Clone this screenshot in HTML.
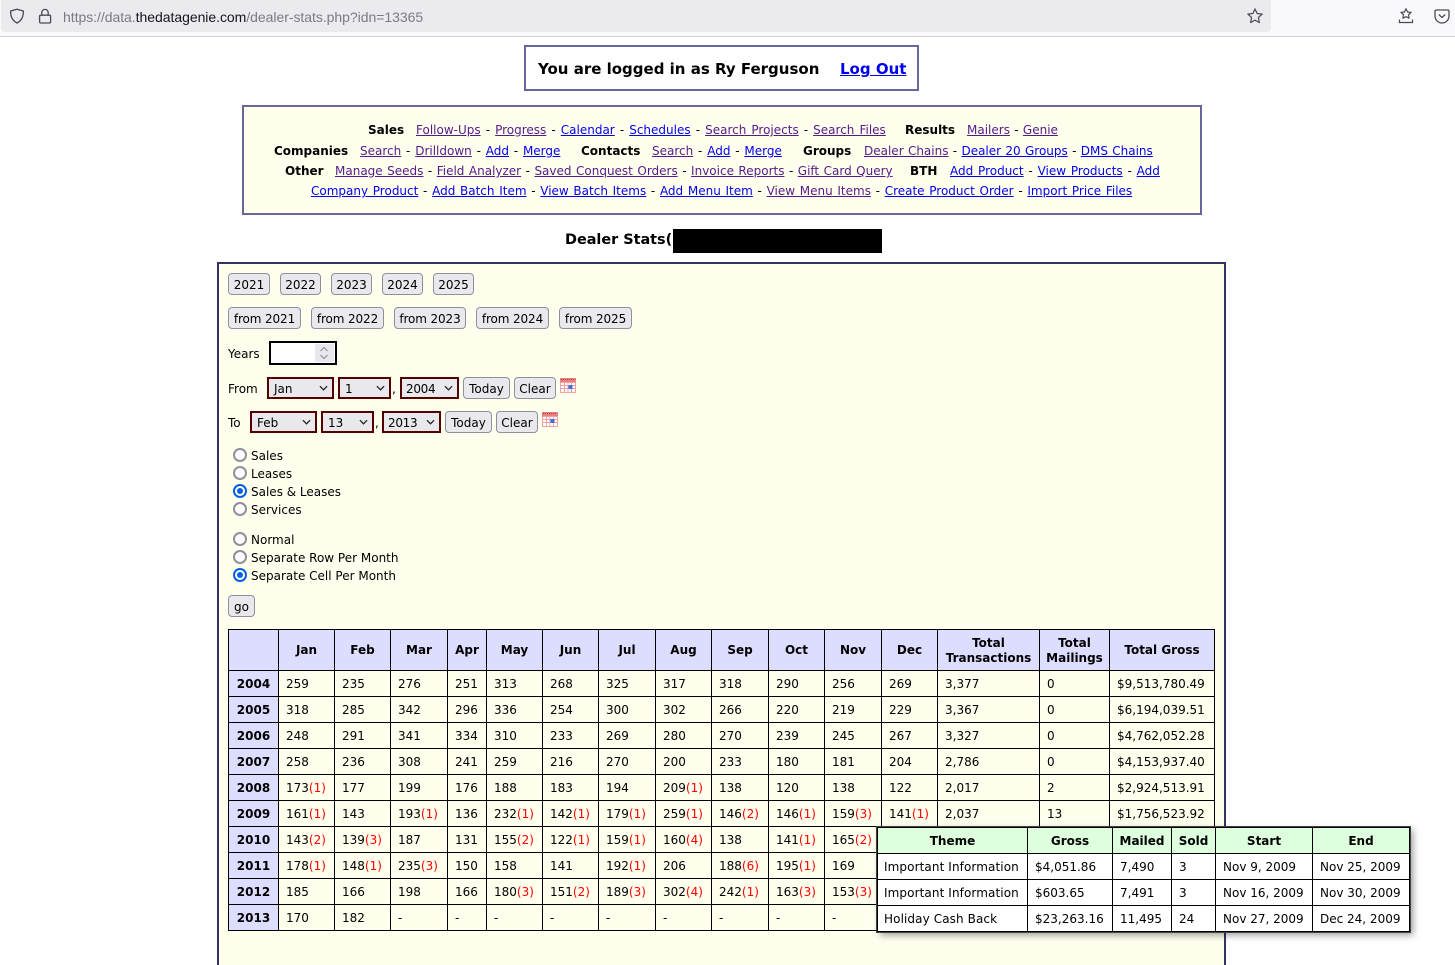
<!DOCTYPE html>
<html><head><meta charset="utf-8"><title>Dealer Stats</title>
<style>
html,body{margin:0;padding:0;background:#fff;width:1455px;height:965px;overflow:hidden}
body{position:relative;font-family:"DejaVu Sans",Verdana,sans-serif;font-size:12px;color:#000}
.a{position:absolute;white-space:nowrap}
.btn{position:absolute;box-sizing:border-box;background:#e9e9ed;border:1px solid #8f8f9d;border-radius:4px;height:22px;line-height:22px;text-align:center;white-space:nowrap}
.fr{letter-spacing:-.12px}
.sel{position:absolute;box-sizing:border-box;background:#e9e9ed;border:2px solid #500;height:22px;line-height:20px;padding-left:4px;white-space:nowrap}
.sel svg{position:absolute;right:4px;top:6px}
.lbl{position:absolute;white-space:nowrap;line-height:18px;margin-top:1px}
.r{position:absolute;box-sizing:border-box;width:14px;height:14px;border-radius:50%;border:2px solid #8f8f9d;background:#fff}
.r.c{border-color:#0060df}
.r.c:after{content:"";position:absolute;left:2px;top:2px;width:6px;height:6px;border-radius:50%;background:#0060df}
a{color:#00e;text-decoration:underline}
a.v{color:#551a8b}
.nav{position:absolute;white-space:nowrap;line-height:20px;height:20px}
.nav b{color:#000}
table{position:absolute;border-collapse:collapse;table-layout:fixed;font-size:12px}
td,th{box-sizing:border-box;border:1px solid #000;padding:0 0 0 7px;height:26px;text-align:left;white-space:nowrap;overflow:hidden}
#m{left:228px;top:629px;background:#ffffee}
#m th{background:#ddf;text-align:center;padding:1px 0 0;line-height:15px;height:41px}
#m td.y{background:#ddf;font-weight:bold;text-align:center;padding:0}
#m i{font-style:normal;color:#f00}
#p{left:877px;top:827px;background:#fff;outline:1px solid #444;box-shadow:3px 3px 7px rgba(0,0,0,.4)}
#p th{background:#dfd;text-align:center;padding:0}
#p td:first-child{padding-left:6px;letter-spacing:.1px}
</style></head><body>

<div class="a" style="left:0;top:0;width:1455px;height:36px;background:#f9f9fb;border-bottom:1px solid #cfcfd8"></div>
<div class="a" style="left:1px;top:0;width:1270px;height:32px;background:#ebebef;border-radius:0 0 4px 4px"></div>
<svg class="a" style="left:9px;top:8px" width="16" height="16" viewBox="0 0 16 16" fill="none" stroke="#4a4a55" stroke-width="1.3"><path d="M8 1.2 L14.3 3 C14.6 8.5 12.5 12.6 8 15 C3.5 12.6 1.4 8.5 1.7 3 Z"/></svg>
<svg class="a" style="left:37px;top:8px" width="16" height="16" viewBox="0 0 16 16" fill="none" stroke="#4a4a55" stroke-width="1.3"><rect x="2.6" y="7.2" width="11" height="7.8" rx="1.2"/><path d="M4.8 7.2V4.6a3.2 3.2 0 0 1 6.4 0V7.2"/></svg>
<div class="a" style="left:63px;top:9px;font:14px/16px 'Liberation Sans',sans-serif;color:#7a7a80;letter-spacing:-.04px">https://data.<span style="color:#15141a">thedatagenie.com</span>/dealer-stats.php?idn=13365</div>
<svg class="a" style="left:1247px;top:8px" width="16" height="16" viewBox="0 0 16 16" fill="none" stroke="#4a4a55" stroke-width="1.2"><path d="M8 .9 10.1 5.5 15.2 6.1 11.4 9.5 12.4 14.6 8 12.1 3.6 14.6 4.6 9.5 .8 6.1 5.9 5.5Z" stroke-linejoin="round"/></svg>
<svg class="a" style="left:1398px;top:8px" width="16" height="16" viewBox="0 0 16 16" fill="none" stroke="#4a4a55" stroke-width="1.2"><path d="M8 .8 9.6 4 13 4.4 10.5 6.8 11.1 10.2 8 8.6 4.9 10.2 5.5 6.8 3 4.4 6.4 4Z" stroke-linejoin="round"/><path d="M1.5 11.5V14.5H14.5V11.5" stroke-width="1.2"/></svg>
<svg class="a" style="left:1434px;top:9px" width="16" height="15" viewBox="0 0 16 15" fill="none" stroke="#4a4a55" stroke-width="1.3"><path d="M2.3 1H13.7A1.3 1.3 0 0 1 15 2.3V7A7 7 0 0 1 1 7V2.3A1.3 1.3 0 0 1 2.3 1Z"/><path d="M4.8 5.5 8 8.5 11.2 5.5"/></svg>

<div class="a" style="left:524px;top:45px;width:395px;height:46px;box-sizing:border-box;border:2px solid #666699"></div>
<div class="a" style="left:538px;top:60px;font-weight:bold;font-size:15px;line-height:19px">You are logged in as Ry Ferguson</div>
<div class="a" style="left:840px;top:60px;font-weight:bold;font-size:15px;line-height:19px"><a href="#">Log Out</a></div>

<div class="a" style="left:242px;top:105px;width:960px;height:110px;box-sizing:border-box;border:2px solid #666699;background:#ffffee"></div>

<div class="nav" style="left:368px;top:120px"><b>Sales</b></div>
<div class="nav" style="left:416px;top:120px;word-spacing:1.25px"><a class="v" href="#">Follow-Ups</a> - <a class="v" href="#">Progress</a> - <a href="#">Calendar</a> - <a href="#">Schedules</a> - <a class="v" href="#">Search Projects</a> - <a class="v" href="#">Search Files</a></div>
<div class="nav" style="left:905px;top:120px"><b>Results</b></div>
<div class="nav" style="left:967px;top:120px;word-spacing:.5px"><a class="v" href="#">Mailers</a> - <a class="v" href="#">Genie</a></div>

<div class="nav" style="left:274px;top:141px"><b>Companies</b></div>
<div class="nav" style="left:360px;top:141px;word-spacing:1px"><a class="v" href="#">Search</a> - <a class="v" href="#">Drilldown</a> - <a href="#">Add</a> - <a href="#">Merge</a></div>
<div class="nav" style="left:581px;top:141px"><b>Contacts</b></div>
<div class="nav" style="left:652px;top:141px;word-spacing:1px"><a class="v" href="#">Search</a> - <a href="#">Add</a> - <a href="#">Merge</a></div>
<div class="nav" style="left:803px;top:141px"><b>Groups</b></div>
<div class="nav" style="left:864px;top:141px;word-spacing:.5px"><a class="v" href="#">Dealer Chains</a> - <a href="#">Dealer 20 Groups</a> - <a href="#">DMS Chains</a></div>

<div class="nav" style="left:285px;top:161px"><b>Other</b></div>
<div class="nav" style="left:335px;top:161px;word-spacing:.67px"><a class="v" href="#">Manage Seeds</a> - <a class="v" href="#">Field Analyzer</a> - <a class="v" href="#">Saved Conquest Orders</a> - <a class="v" href="#">Invoice Reports</a> - <a class="v" href="#">Gift Card Query</a></div>
<div class="nav" style="left:910px;top:161px"><b>BTH</b></div>
<div class="nav" style="left:950px;top:161px;word-spacing:1px"><a href="#">Add Product</a> - <a href="#">View Products</a> - <a href="#">Add</a></div>

<div class="nav" style="left:311px;top:181px;word-spacing:.88px"><a href="#">Company Product</a> - <a href="#">Add Batch Item</a> - <a href="#">View Batch Items</a> - <a href="#">Add Menu Item</a> - <a class="v" href="#">View Menu Items</a> - <a href="#">Create Product Order</a> - <a href="#">Import Price Files</a></div>

<div class="a" style="left:565px;top:231px;font-weight:bold;font-size:14.4px;line-height:19px">Dealer Stats(</div>
<div class="a" style="left:673px;top:229px;width:209px;height:24px;background:#000"></div>

<div class="a" style="left:217px;top:262px;width:1009px;height:720px;box-sizing:border-box;border:2px solid #333366;background:#ffffee"></div>

<div class="btn" style="left:228px;top:273px;width:42px">2021</div>
<div class="btn" style="left:280px;top:273px;width:41px">2022</div>
<div class="btn" style="left:331px;top:273px;width:41px">2023</div>
<div class="btn" style="left:382px;top:273px;width:41px">2024</div>
<div class="btn" style="left:433px;top:273px;width:41px">2025</div>
<div class="btn fr" style="left:228px;top:307px;width:73px">from 2021</div>
<div class="btn fr" style="left:311px;top:307px;width:73px">from 2022</div>
<div class="btn fr" style="left:394px;top:307px;width:72px">from 2023</div>
<div class="btn fr" style="left:476px;top:307px;width:73px">from 2024</div>
<div class="btn fr" style="left:559px;top:307px;width:73px">from 2025</div>

<div class="lbl" style="left:228px;top:344px">Years</div>
<div class="a" style="left:269px;top:341px;width:68px;height:24px;box-sizing:border-box;border:2px solid #000;background:#fff"></div>
<div class="a" style="left:315px;top:344px;width:19px;height:18px;background:#e9e9ed"></div>
<svg class="a" style="left:319px;top:346px" width="10" height="14" viewBox="0 0 10 14" fill="none" stroke="#8a8a90" stroke-width="1.1"><path d="M1.5 5 5 1.5 8.5 5M1.5 9 5 12.5 8.5 9"/></svg>

<div class="lbl" style="left:228px;top:379px">From</div>
<div class="sel" style="left:267px;top:377px;width:67px;padding-left:5px">Jan<svg width="9" height="6" viewBox="0 0 10 6" fill="none" stroke="#222" stroke-width="1.4"><path d="M1 1 5 5 9 1"/></svg></div>
<div class="sel" style="left:338px;top:377px;width:53px;padding-left:5px">1<svg width="9" height="6" viewBox="0 0 10 6" fill="none" stroke="#222" stroke-width="1.4"><path d="M1 1 5 5 9 1"/></svg></div>
<div class="lbl" style="left:392px;top:379px">,</div>
<div class="sel" style="left:400px;top:377px;width:59px;letter-spacing:-.3px">2004<svg width="9" height="6" viewBox="0 0 10 6" fill="none" stroke="#222" stroke-width="1.4"><path d="M1 1 5 5 9 1"/></svg></div>
<div class="btn" style="left:463px;top:377px;width:47px">Today</div>
<div class="btn" style="left:514px;top:377px;width:42px">Clear</div>
<svg class="a" style="left:560px;top:378px" width="16" height="15" viewBox="0 0 16 15"><rect width="16" height="15" fill="#f2a0a0"/><rect width="16" height="4" fill="#e88080"/><path d="M1 1.5h14" stroke="#b04040" stroke-dasharray="1 1"/><path d="M1 5h14v9H1z" fill="#fff"/><path d="M1 7.5h14M1 10.5h14M4.5 5v9M8 5v9M11.5 5v9" stroke="#f2a0a0"/><rect x="8.5" y="7" width="4" height="4" fill="#3a6fe0"/></svg>

<div class="lbl" style="left:228px;top:413px">To</div>
<div class="sel" style="left:250px;top:411px;width:67px;padding-left:5px">Feb<svg width="9" height="6" viewBox="0 0 10 6" fill="none" stroke="#222" stroke-width="1.4"><path d="M1 1 5 5 9 1"/></svg></div>
<div class="sel" style="left:321px;top:411px;width:53px;padding-left:5px">13<svg width="9" height="6" viewBox="0 0 10 6" fill="none" stroke="#222" stroke-width="1.4"><path d="M1 1 5 5 9 1"/></svg></div>
<div class="lbl" style="left:375px;top:413px">,</div>
<div class="sel" style="left:382px;top:411px;width:59px;letter-spacing:-.3px">2013<svg width="9" height="6" viewBox="0 0 10 6" fill="none" stroke="#222" stroke-width="1.4"><path d="M1 1 5 5 9 1"/></svg></div>
<div class="btn" style="left:445px;top:411px;width:47px">Today</div>
<div class="btn" style="left:496px;top:411px;width:42px">Clear</div>
<svg class="a" style="left:542px;top:412px" width="16" height="15" viewBox="0 0 16 15"><rect width="16" height="15" fill="#f2a0a0"/><rect width="16" height="4" fill="#e88080"/><path d="M1 1.5h14" stroke="#b04040" stroke-dasharray="1 1"/><path d="M1 5h14v9H1z" fill="#fff"/><path d="M1 7.5h14M1 10.5h14M4.5 5v9M8 5v9M11.5 5v9" stroke="#f2a0a0"/><rect x="8.5" y="7" width="4" height="4" fill="#3a6fe0"/></svg>

<div class="r" style="left:233px;top:448px"></div><div class="lbl" style="left:251px;top:446px">Sales</div>
<div class="r" style="left:233px;top:466px"></div><div class="lbl" style="left:251px;top:464px">Leases</div>
<div class="r c" style="left:233px;top:484px"></div><div class="lbl" style="left:251px;top:482px">Sales &amp; Leases</div>
<div class="r" style="left:233px;top:502px"></div><div class="lbl" style="left:251px;top:500px">Services</div>
<div class="r" style="left:233px;top:532px"></div><div class="lbl" style="left:251px;top:530px">Normal</div>
<div class="r" style="left:233px;top:550px"></div><div class="lbl" style="left:251px;top:548px">Separate Row Per Month</div>
<div class="r c" style="left:233px;top:568px"></div><div class="lbl" style="left:251px;top:566px">Separate Cell Per Month</div>
<div class="btn" style="left:228px;top:595px;width:27px">go</div>

<table id="m" style="width:986px">
<colgroup><col style="width:50px"><col style="width:56px"><col style="width:56px"><col style="width:57px"><col style="width:39px"><col style="width:56px"><col style="width:56px"><col style="width:57px"><col style="width:56px"><col style="width:57px"><col style="width:56px"><col style="width:57px"><col style="width:56px"><col style="width:102px"><col style="width:70px"><col style="width:105px"></colgroup>
<tr><th></th><th>Jan</th><th>Feb</th><th>Mar</th><th>Apr</th><th>May</th><th>Jun</th><th>Jul</th><th>Aug</th><th>Sep</th><th>Oct</th><th>Nov</th><th>Dec</th><th>Total<br>Transactions</th><th>Total<br>Mailings</th><th>Total Gross</th></tr>
<tr><td class="y">2004</td><td>259</td><td>235</td><td>276</td><td>251</td><td>313</td><td>268</td><td>325</td><td>317</td><td>318</td><td>290</td><td>256</td><td>269</td><td>3,377</td><td>0</td><td>$9,513,780.49</td></tr>
<tr><td class="y">2005</td><td>318</td><td>285</td><td>342</td><td>296</td><td>336</td><td>254</td><td>300</td><td>302</td><td>266</td><td>220</td><td>219</td><td>229</td><td>3,367</td><td>0</td><td>$6,194,039.51</td></tr>
<tr><td class="y">2006</td><td>248</td><td>291</td><td>341</td><td>334</td><td>310</td><td>233</td><td>269</td><td>280</td><td>270</td><td>239</td><td>245</td><td>267</td><td>3,327</td><td>0</td><td>$4,762,052.28</td></tr>
<tr><td class="y">2007</td><td>258</td><td>236</td><td>308</td><td>241</td><td>259</td><td>216</td><td>270</td><td>200</td><td>233</td><td>180</td><td>181</td><td>204</td><td>2,786</td><td>0</td><td>$4,153,937.40</td></tr>
<tr><td class="y">2008</td><td>173<i>(1)</i></td><td>177</td><td>199</td><td>176</td><td>188</td><td>183</td><td>194</td><td>209<i>(1)</i></td><td>138</td><td>120</td><td>138</td><td>122</td><td>2,017</td><td>2</td><td>$2,924,513.91</td></tr>
<tr><td class="y">2009</td><td>161<i>(1)</i></td><td>143</td><td>193<i>(1)</i></td><td>136</td><td>232<i>(1)</i></td><td>142<i>(1)</i></td><td>179<i>(1)</i></td><td>259<i>(1)</i></td><td>146<i>(2)</i></td><td>146<i>(1)</i></td><td>159<i>(3)</i></td><td>141<i>(1)</i></td><td>2,037</td><td>13</td><td>$1,756,523.92</td></tr>
<tr><td class="y">2010</td><td>143<i>(2)</i></td><td>139<i>(3)</i></td><td>187</td><td>131</td><td>155<i>(2)</i></td><td>122<i>(1)</i></td><td>159<i>(1)</i></td><td>160<i>(4)</i></td><td>138</td><td>141<i>(1)</i></td><td>165<i>(2)</i></td><td></td><td></td><td></td><td></td></tr>
<tr><td class="y">2011</td><td>178<i>(1)</i></td><td>148<i>(1)</i></td><td>235<i>(3)</i></td><td>150</td><td>158</td><td>141</td><td>192<i>(1)</i></td><td>206</td><td>188<i>(6)</i></td><td>195<i>(1)</i></td><td>169</td><td></td><td></td><td></td><td></td></tr>
<tr><td class="y">2012</td><td>185</td><td>166</td><td>198</td><td>166</td><td>180<i>(3)</i></td><td>151<i>(2)</i></td><td>189<i>(3)</i></td><td>302<i>(4)</i></td><td>242<i>(1)</i></td><td>163<i>(3)</i></td><td>153<i>(3)</i></td><td></td><td></td><td></td><td></td></tr>
<tr><td class="y">2013</td><td>170</td><td>182</td><td>-</td><td>-</td><td>-</td><td>-</td><td>-</td><td>-</td><td>-</td><td>-</td><td>-</td><td></td><td></td><td></td><td></td></tr>
</table>

<table id="p" style="width:532px">
<colgroup><col style="width:150px"><col style="width:85px"><col style="width:59px"><col style="width:44px"><col style="width:97px"><col style="width:97px"></colgroup>
<tr><th>Theme</th><th>Gross</th><th>Mailed</th><th>Sold</th><th>Start</th><th>End</th></tr>
<tr><td>Important Information</td><td>$4,051.86</td><td>7,490</td><td>3</td><td>Nov 9, 2009</td><td>Nov 25, 2009</td></tr>
<tr><td>Important Information</td><td>$603.65</td><td>7,491</td><td>3</td><td>Nov 16, 2009</td><td>Nov 30, 2009</td></tr>
<tr><td>Holiday Cash Back</td><td>$23,263.16</td><td>11,495</td><td>24</td><td>Nov 27, 2009</td><td>Dec 24, 2009</td></tr>
</table>
</body></html>
